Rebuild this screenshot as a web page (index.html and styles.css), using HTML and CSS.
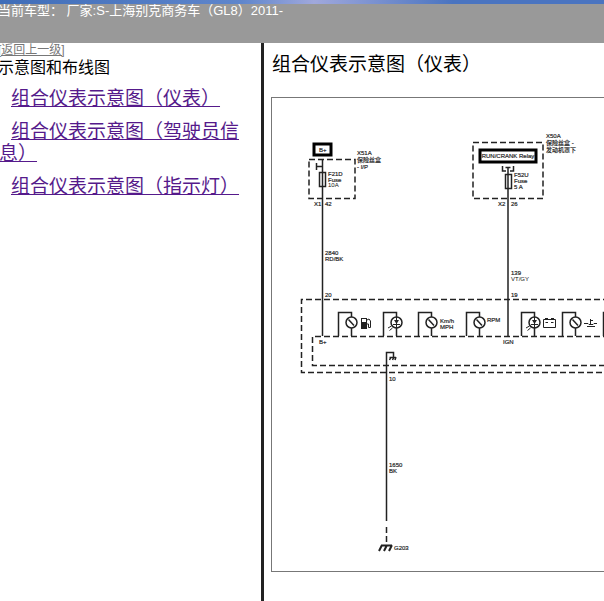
FILE: index.html
```
<!DOCTYPE html>
<html lang="zh-CN">

<head>
<meta charset="utf-8">
<title>组合仪表示意图（仪表）</title>
<link rel="stylesheet" href="styles.css">
</head>

<body>

<header class="topbar">当前车型： 厂家:S-上海别克商务车（GL8）2011-</header>

<div class="frames">
<nav class="menu">
<a class="back" href="#">[返回上一级]</a>
<div class="group">示意图和布线图</div>
<ul>
<li><a href="#">组合仪表示意图（仪表）</a></li>
<li><a href="#">组合仪表示意图（驾驶员信息）</a></li>
<li><a href="#">组合仪表示意图（指示灯）</a></li>
</ul>
</nav>

<main class="content">
<h1>组合仪表示意图（仪表）</h1>
<div class="sheet">
<svg class="diagram" width="720" height="473" viewBox="272 98 720 473">
<defs>
<g id="loop">
<path d="M0.5 37V13.5H13.5V18M13.5 29V37"/>
<circle cx="13.5" cy="23.500" r="5.500"/>
</g>
<g id="gauge">
<use href="#loop"/>
<path d="M10.500 20.500L16 26.500"/>
</g>
<g id="lamp">
<use href="#loop"/>
<path class="thin" d="M13.500 18V29M10 25.500H17"/>
<path class="fill" d="M11 21H16L13.500 25Z"/>
<path class="thin" d="M8.500 27L5 29M9.500 29L6.500 31.500"/>
</g>
</defs>

<!-- fuse F21D -->
<rect class="bold" x="314" y="144" width="17" height="11"/>
<path class="dash" d="M309 159.500H355V198.500H309Z"/>
<rect x="319.500" y="172.500" width="6" height="14"/>
<path d="M322.500 160V336M316.500 163V170M316 166.500H322"/>
<text x="319" y="152">B+</text>
<text x="357" y="155">X51A</text>
<text x="357" y="162">保险丝盒</text>
<text x="357" y="169">- I/P</text>
<text x="328" y="176">F21D</text>
<text x="328" y="182">Fuse</text>
<text class="light" x="328" y="187">10A</text>
<text x="314" y="206">X1</text>
<text x="325" y="206">42</text>
<text x="325" y="255">2840</text>
<text x="325" y="261">RD/BK</text>
<text x="325" y="297">20</text>
<text x="319" y="344">B+</text>

<!-- fuse F52U -->
<path class="dash" d="M473 142.500H543V198.500H473Z"/>
<rect class="bold" x="480" y="150" width="56" height="12"/>
<rect x="505.500" y="174.500" width="6" height="14"/>
<path d="M508 167V336M502.500 166V171H506M510 171H513.500V166M505.500 167.500H510.500"/>
<text x="508" y="158" text-anchor="middle">RUN/CRANK Relay</text>
<text x="546" y="138">X50A</text>
<text x="546" y="145">保险丝盒 -</text>
<text x="546" y="152">发动机罩下</text>
<text x="514" y="177">F52U</text>
<text x="514" y="183">Fuse</text>
<text x="514" y="189">5 A</text>
<text x="498" y="206">X2</text>
<text x="511" y="206">26</text>
<text x="511" y="275">139</text>
<text class="light" x="511" y="281">VT/GY</text>
<text x="511" y="297">19</text>
<text x="503" y="344">IGN</text>

<!-- instrument cluster -->
<path class="dash" d="M960 299.500H301.500V372.500H960"/>
<path class="dash" d="M960 336.500H312.500V365.500H960"/>
<use href="#gauge" x="338" y="299"/>
<use href="#lamp" x="383" y="299"/>
<use href="#gauge" x="418" y="299"/>
<use href="#gauge" x="466" y="299"/>
<use href="#lamp" x="521" y="299"/>
<use href="#gauge" x="562" y="299"/>
<use href="#gauge" x="603" y="299"/>
<text x="440" y="323">Km/h</text>
<text x="440" y="329">MPH</text>
<text x="487" y="322">RPM</text>

<!-- fuel, battery and coolant symbols -->
<path class="fill" d="M361 318H367V329H361Z"/>
<path class="white" d="M362 319H366V322H362Z"/>
<path class="thin" d="M367 320L369 319L370.500 321V327.500H368.500V324H367"/>
<path class="thin" d="M543.500 319.500H555.500V327.500H543.500ZM545 318.500H548M551 318.500H554M545.500 322.500H548M551 322.500H553.500"/>
<path class="thin" d="M584 323.500H588L589 324.500H593L594 323.500H597M590.500 319V324M590.500 320.500H593M587 326.500H595"/>

<!-- ground G203 -->
<path d="M386.500 521V352.500H393.500V357M389.500 357.500H396M391 357L389.500 360M394 357L392.500 360M396 357L395 360"/>
<path class="dash" d="M386.500 527V546"/>
<path class="ground" d="M381 545.500H392M382 545L379 551M387 545L384 551M392 545L389 551"/>
<text x="389" y="381">10</text>
<text x="389" y="467">1650</text>
<text x="389" y="473">BK</text>
<text x="394" y="550">G203</text>
</svg>
</div>
</main>
</div>

</body>

</html>
```
FILE: styles.css
```
html
{
	font-family: "Liberation Sans", "Noto Sans CJK SC", sans-serif;
	background-color: #FFFFFF;
}

body
{
	margin: 0;
	min-height: 100vh;
	display: flex;
	flex-direction: column;
	overflow: hidden;
}

.topbar
{
	background: linear-gradient(to right, #3F6DB8, #5F86CC 40%, #A0A8DC 52%, #4A74C0 75%) no-repeat top / 100% 4px #999999;
	color: #FFFFFF;
	font-size: 13px;
	line-height: 16px;
	padding: 3px 0 24px;
	border-top: 0;
	text-indent: -2px;
	white-space: nowrap;
}

.frames
{
	flex: 1;
	display: grid;
	grid-template-columns: 264px minmax(0, 1fr);
}

.menu
{
	box-sizing: border-box;
	padding-right: 8px;
	border-right: solid 3px #222222;
}

.back
{
	display: block;
	margin-left: -2px;
	color: #777777;
	font-size: 12px;
	line-height: 15px;
}

.group
{
	margin-left: -2px;
	font-size: 16px;
	line-height: 19px;
}

.menu ul
{
	margin: 11px 0 0 -1px;
	padding: 0;
	list-style: none;
}

.menu li
{
	margin-bottom: 11px;
	font-size: 19px;
	line-height: 22px;
	text-indent: 12px;
}

.menu li a
{
	color: #551A8B;
}

.content
{
	padding-left: 7px;
	overflow: hidden;
}

h1
{
	margin: 10px 0 20px 1px;
	font-size: 19px;
	font-weight: normal;
	line-height: 24px;
	white-space: nowrap;
}

.sheet
{
	width: 720px;
	border: solid 1px #777777;
}

.diagram
{
	display: block;
	fill: none;
	stroke: #222222;
	stroke-width: 1.5;
}

.diagram text
{
	fill: #111111;
	stroke: #333333;
	stroke-width: 0.2;
	font-size: 6px;
}

.diagram .light
{
	stroke: none;
}

.diagram .bold
{
	stroke: #000000;
	stroke-width: 3;
}

.diagram .dash
{
	stroke-dasharray: 6 3;
}

.diagram .thin
{
	stroke-width: 1;
}

.diagram .fill
{
	fill: #222222;
	stroke: none;
}

.diagram .white
{
	fill: #FFFFFF;
	stroke: none;
}

.diagram .ground
{
	stroke-width: 2;
}
```
